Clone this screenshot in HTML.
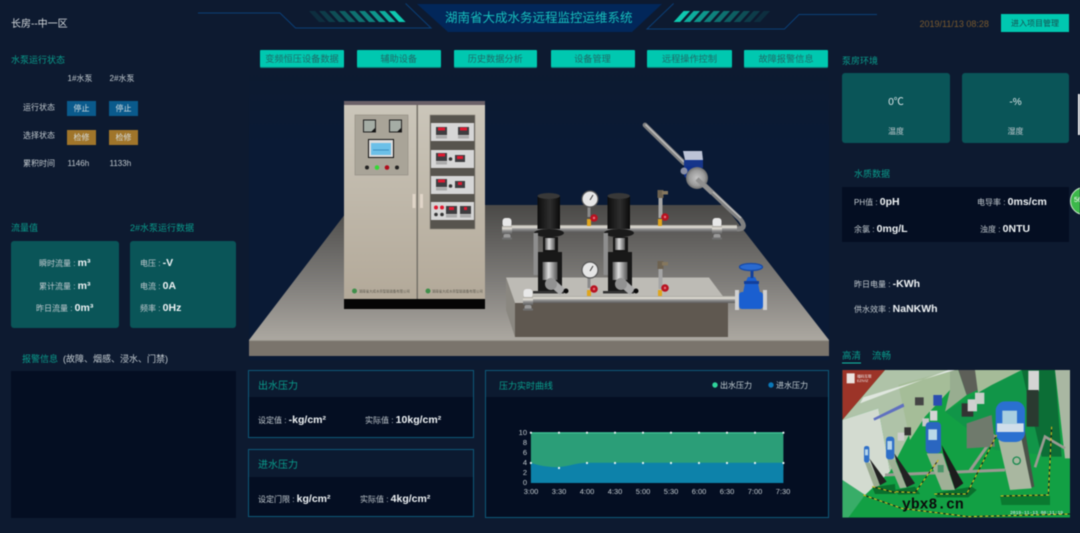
<!DOCTYPE html>
<html lang="zh">
<head>
<meta charset="utf-8">
<title>湖南省大成水务远程监控运维系统</title>
<style>
html,body{margin:0;padding:0;width:1080px;height:533px;overflow:hidden;background:#0d1a30;}
#w{position:relative;width:1080px;height:533px;overflow:hidden;background:#0d1a30;font-family:"Liberation Sans","Noto Sans CJK SC",sans-serif;filter:blur(.45px);}
.t{position:absolute;line-height:12px;white-space:nowrap;color:#c3cbd0;font-size:8px;}
.h{color:#0a9c8c;font-size:9px;}
.v{color:#eef2f4;font-weight:bold;font-size:10.5px;}
.b{position:absolute;}
.tab{position:absolute;top:50px;height:17px;line-height:18px;background:#00c8b0;color:#1f6a68;font-size:9.2px;text-align:center;border-radius:1px;box-shadow:0 1px 0 #0a7f78;}
.sb{position:absolute;width:29px;height:15px;line-height:16px;text-align:center;color:#d5dde0;font-size:8px;}
.blue{background:#0a5a8c;}
.gold{background:#a0752a;}
.card{position:absolute;background:#0a5558;border-radius:3px;}
.panel{position:absolute;background:#040e22;box-sizing:border-box;border:1px solid #0d5878;}
.phead{position:absolute;left:0;top:0;right:0;height:26px;background:#0c1a30;}
</style>
</head>
<body>
<div id="w">

<svg class="b" style="left:0;top:0" width="1080" height="533" viewBox="0 0 1080 533">
<defs>
<linearGradient id="bgf" x1="0" y1="0" x2="0" y2="1"><stop offset="0" stop-color="#0d1a30"/><stop offset=".25" stop-color="#0a1a35"/><stop offset="1" stop-color="#0a1a35"/></linearGradient>
<linearGradient id="plat" x1="0" y1="0" x2="0" y2="1"><stop offset="0" stop-color="#4a4947"/><stop offset=".55" stop-color="#7d7b78"/><stop offset="1" stop-color="#aca8a1"/></linearGradient>
<linearGradient id="cab" x1="0" y1="0" x2="0" y2="1"><stop offset="0" stop-color="#cbc6ba"/><stop offset="1" stop-color="#b3a999"/></linearGradient>
<linearGradient id="hp" x1="0" y1="0" x2="0" y2="1"><stop offset="0" stop-color="#a5a39c"/><stop offset=".3" stop-color="#e4e1d8"/><stop offset=".6" stop-color="#8f8f8f"/><stop offset="1" stop-color="#5e5e5e"/></linearGradient>
<linearGradient id="steel" x1="0" y1="0" x2="1" y2="0"><stop offset="0" stop-color="#555"/><stop offset=".4" stop-color="#dedede"/><stop offset="1" stop-color="#555"/></linearGradient>
<linearGradient id="motor" x1="0" y1="0" x2="1" y2="0"><stop offset="0" stop-color="#0c0c0c"/><stop offset=".55" stop-color="#2e2e2e"/><stop offset="1" stop-color="#0a0a0a"/></linearGradient>
<radialGradient id="fl"><stop offset="0" stop-color="#c5c5c5"/><stop offset=".7" stop-color="#9a9a9a"/><stop offset="1" stop-color="#6c6c6c"/></radialGradient>
<clipPath id="vc"><rect x="22" y="90" width="683" height="443"/></clipPath>
<g id="st1"><polygon points="0,0 6,0 16.6,11 10,11" fill="#0fc8b0"/></g>
<g id="st2"><polygon points="0,11 6.5,11 16.5,0 10,0" fill="#0fc8b0"/></g>
<g id="pump">
  <rect x="537.500" y="196" width="22.500" height="33" fill="url(#motor)"/>
  <ellipse cx="548.700" cy="196" rx="11.200" ry="3" fill="#383838"/>
  <ellipse cx="549" cy="233" rx="15" ry="4" fill="#1a1a1a"/>
  <rect x="533.500" y="233" width="4.500" height="42" fill="#8e8e8e"/>
  <rect x="543" y="237" width="15" height="18" fill="#151515"/>
  <rect x="545" y="238" width="10" height="12" fill="url(#steel)"/>
  <rect x="538" y="252" width="24" height="40" fill="#181818"/>
  <rect x="542.500" y="262" width="15" height="18" fill="url(#steel)"/>
  <rect x="533" y="291" width="31" height="2.500" fill="#333"/>
  <polygon points="546,283 553,278 565,289 560,295" fill="#aaa"/>
  <circle cx="551" cy="284" r="6" fill="#929292"/>
  <circle cx="566" cy="291" r="2.500" fill="#0a0a0a"/>
</g>
<g id="gauge">
  <rect x="587.500" y="207" width="3" height="10" fill="#8a8a8a"/>
  <rect x="587" y="219" width="4" height="7" fill="#e0a51c"/>
  <circle cx="590" cy="199" r="8" fill="#e6e6e6" stroke="#555" stroke-width="1.200"/>
  <line x1="590" y1="200" x2="593" y2="195" stroke="#222" stroke-width=".8"/>
  <circle cx="594" cy="218" r="3.800" fill="#b81220"/>
  <circle cx="594" cy="218" r="1.200" fill="#e8707a"/>
</g>
<g id="trans">
  <rect x="657.500" y="190" width="6" height="8" fill="#6d6250"/>
  <rect x="662" y="191" width="6" height="3.500" fill="#85775e"/>
  <rect x="658.500" y="198" width="4" height="20" fill="#a5a5a5"/>
  <rect x="658" y="219" width="4" height="7" fill="#e0a51c"/>
  <circle cx="665" cy="217" r="3.800" fill="#b81220"/>
  <circle cx="665" cy="217" r="1.200" fill="#e8707a"/>
</g>
<g id="clamp">
  <rect x="-4.500" y="-10" width="9" height="9" rx="3" fill="#e8e8e8"/>
  <rect x="-5" y="-2" width="10" height="8" fill="url(#hp)"/>
  <rect x="-3.500" y="6" width="7" height="5" rx="2" fill="#999"/>
  <rect x="-5" y="9.500" width="10" height="2" fill="#6f6f6f"/>
</g>
</defs>

<!-- header decoration -->
<polyline points="198,13 280,13 295.500,28 431,28 405.600,3.500" fill="none" stroke="#0b3f77" stroke-width="1"/>
<polyline points="673.600,3.500 647,29 784.500,29 799,14.500 877,14.500" fill="none" stroke="#0b3f77" stroke-width="1"/>
<polygon points="417,4 662,4 632,32 448,32" fill="#02275a"/>
<use href="#st1" x="389" y="11" opacity="1"/><use href="#st1" x="379" y="11" opacity=".85"/><use href="#st1" x="369" y="11" opacity=".72"/><use href="#st1" x="359" y="11" opacity=".6"/><use href="#st1" x="349" y="11" opacity=".5"/><use href="#st1" x="339" y="11" opacity=".4"/><use href="#st1" x="329" y="11" opacity=".3"/><use href="#st1" x="319" y="11" opacity=".2"/><use href="#st1" x="309" y="11" opacity=".12"/>
<use href="#st2" x="673.600" y="11" opacity="1"/><use href="#st2" x="683.600" y="11" opacity=".85"/><use href="#st2" x="693.600" y="11" opacity=".72"/><use href="#st2" x="703.600" y="11" opacity=".6"/><use href="#st2" x="713.600" y="11" opacity=".5"/><use href="#st2" x="723.600" y="11" opacity=".4"/><use href="#st2" x="733.600" y="11" opacity=".3"/><use href="#st2" x="743.600" y="11" opacity=".2"/><use href="#st2" x="753.600" y="11" opacity=".12"/>

<!-- scene -->
<rect x="249" y="70" width="580" height="290" fill="url(#bgf)"/>
<polygon points="352,205 724,205 829,340 249,340" fill="url(#plat)"/>
<rect x="249" y="340" width="580" height="16" fill="#7a746c"/>
<rect x="249" y="340" width="580" height="1" fill="#98948c"/>

<!-- cabinet -->
<rect x="344" y="105" width="141" height="194" fill="url(#cab)"/>
<rect x="344" y="101" width="141" height="4" fill="#6b6168"/>
<rect x="416.500" y="105" width="1.500" height="194" fill="#77736a"/>
<rect x="344" y="299" width="141" height="10" fill="#050505"/>
<rect x="355" y="115" width="53" height="60" fill="#a9a498" stroke="#8f8b80" stroke-width=".6"/>
<rect x="363.500" y="120" width="12" height="12" fill="#a5ada5" stroke="#222" stroke-width="1"/>
<polygon points="375,132 375,128 371,132" fill="#111"/>
<rect x="389.500" y="120" width="12" height="12" fill="#a5ada5" stroke="#222" stroke-width="1"/>
<polygon points="401,132 401,128 397,132" fill="#111"/>
<rect x="368.500" y="139.500" width="25" height="18" fill="#ddd" stroke="#111" stroke-width="1"/>
<rect x="371" y="143" width="20" height="12" fill="#6cc0e8"/>
<line x1="373" y1="150" x2="389" y2="150" stroke="#2a7ab0" stroke-width=".7"/>
<circle cx="367" cy="167.500" r="2" fill="#222"/><circle cx="377" cy="167.500" r="2.300" fill="#35d935"/><circle cx="387" cy="167.500" r="2.300" fill="#b00a1a"/><circle cx="397" cy="167.500" r="2" fill="#222"/>
<rect x="430" y="115" width="45" height="114" fill="#57544e" stroke="#8f8b80" stroke-width=".6"/>
<rect x="431" y="123" width="43" height="18" fill="#d6d6d6"/>
<rect x="431" y="150" width="43" height="18" fill="#d6d6d6"/>
<rect x="431" y="176" width="43" height="18" fill="#d6d6d6"/>
<rect x="431" y="202" width="43" height="18" fill="#d6d6d6"/>
<g fill="#3d3d40">
<rect x="436" y="127" width="11" height="8"/><rect x="458" y="127" width="11" height="8"/>
<rect x="436" y="153" width="11" height="8"/><rect x="455" y="155" width="10" height="7"/>
<rect x="436" y="179" width="11" height="8"/><rect x="455" y="181" width="10" height="7"/>
<rect x="446" y="206" width="11" height="8"/><rect x="460" y="206" width="11" height="8"/>
</g>
<g fill="#e01830">
<rect x="438" y="127.500" width="7" height="3"/><rect x="460" y="127.500" width="7" height="3"/>
<rect x="438" y="153.500" width="7" height="3"/><rect x="457" y="156" width="6" height="3"/>
<rect x="438" y="179.500" width="7" height="3"/><rect x="458" y="182" width="4" height="3"/>
<rect x="449" y="207" width="5" height="3"/><rect x="464" y="207" width="3" height="3"/>
<circle cx="436" cy="207.500" r="2"/><circle cx="442" cy="207.500" r="2"/>
</g>
<g fill="#333"><circle cx="450.500" cy="159" r="1.800"/><circle cx="450.500" cy="186" r="1.800"/><circle cx="436" cy="214.500" r="1.800"/><circle cx="442" cy="214.500" r="1.800"/></g>
<g fill="#aaa"><rect x="436" y="135.500" width="11" height="3"/><rect x="458" y="135.500" width="11" height="3"/><rect x="436" y="161.500" width="11" height="3"/><rect x="436" y="187.500" width="11" height="3"/><rect x="446" y="214.500" width="11" height="3"/><rect x="460" y="214.500" width="11" height="3"/></g>
<rect x="412.500" y="194" width="3" height="14" fill="#e0d5c8"/><rect x="420" y="194" width="3" height="14" fill="#e0d5c8"/>
<circle cx="354.500" cy="291" r="2.500" fill="#3f8f4a"/><circle cx="428" cy="291" r="2.500" fill="#3f8f4a"/>
<text x="359" y="292.500" font-size="3.400" fill="#5d5a50" font-family="Liberation Sans,Noto Sans CJK SC,sans-serif">湖南省大成水务智能装备有限公司</text>
<text x="432" y="292.500" font-size="3.400" fill="#5d5a50" font-family="Liberation Sans,Noto Sans CJK SC,sans-serif">湖南省大成水务智能装备有限公司</text>

<!-- upper pipework -->
<line x1="645" y1="125" x2="684" y2="163" stroke="#808080" stroke-width="4.800" stroke-linecap="round"/>
<line x1="645.500" y1="124.500" x2="684" y2="162" stroke="#b8b8b8" stroke-width="1.600"/>
<path d="M697 178 L740 219 Q748 229 737 229" fill="none" stroke="#808080" stroke-width="5"/>
<path d="M697 177 L741 218" fill="none" stroke="#b8b8b8" stroke-width="1.600"/>
<rect x="507" y="225" width="230" height="7" fill="url(#hp)"/>
<rect x="684" y="160" width="19" height="8" fill="#16358a"/>
<polygon points="683,151 702,151 703,160 685,160" fill="#bcc3d6"/>
<rect x="684" y="166" width="13" height="12" rx="3" fill="#10308a"/>
<circle cx="684" cy="171" r="3.500" fill="#8a8fa5"/>
<circle cx="697" cy="178" r="11" fill="url(#fl)"/>
<line x1="697" y1="179" x2="712" y2="193" stroke="#8f8f8f" stroke-width="4.500"/>

<!-- step platform -->
<polygon points="506,277.500 709,277.500 728,303 515,303" fill="#bdbbb5"/>
<polygon points="506,277.500 515,303 515,337 506,310" fill="#8a8780"/>
<rect x="515" y="303" width="213" height="34" fill="#5f5850"/>

<use href="#pump"/><use href="#pump" x="70"/>
<use href="#gauge"/><use href="#gauge" y="71"/>
<use href="#trans"/><use href="#trans" y="71"/>
<use href="#clamp" x="507" y="228"/><use href="#clamp" x="717" y="228"/>

<!-- lower pipe & valve -->
<rect x="530" y="296" width="207" height="7" fill="url(#hp)"/>
<use href="#clamp" x="528" y="299"/>
<rect x="735" y="290" width="4" height="20" fill="#d0d0d0"/>
<rect x="763" y="290" width="4" height="20" fill="#d0d0d0"/>
<rect x="739" y="292" width="24" height="17" rx="3" fill="#1a5fd0"/>
<polygon points="743,293 760,293 758,283 755,277 748,277 745,283" fill="#1a5fd0"/>
<rect x="744" y="281" width="15" height="3" fill="#123f9c"/>
<rect x="750.500" y="270" width="3" height="8" fill="#14409a"/>
<ellipse cx="751" cy="267" rx="11.500" ry="3.500" fill="#2a6ad0" stroke="#164aa8" stroke-width="1.300"/>

<!-- chart -->
<rect x="485.500" y="370.500" width="343" height="147" fill="#040e22" stroke="#0d5878"/>
<rect x="486" y="371" width="342" height="26" fill="#0c1a30"/>
<polygon points="530.900,432.700 783.400,432.700 783.400,470 530.900,470" fill="#2b9e78"/>
<path d="M530.900 462.800 C540 466 550 467.500 559 467 C568 466.500 576 463 587 462.800 L783.400 462.800 L783.400 483 L530.900 483 Z" fill="#0d82aa"/>
<line x1="530.900" y1="432.700" x2="783.400" y2="432.700" stroke="#49d6a4" stroke-width="1"/>
<g fill="#e8f4f4">
<circle cx="530.900" cy="432.700" r="1.100"/><circle cx="559" cy="432.700" r="1.100"/><circle cx="587" cy="432.700" r="1.100"/><circle cx="615" cy="432.700" r="1.100"/><circle cx="643" cy="432.700" r="1.100"/><circle cx="671" cy="432.700" r="1.100"/><circle cx="699" cy="432.700" r="1.100"/><circle cx="727" cy="432.700" r="1.100"/><circle cx="755" cy="432.700" r="1.100"/><circle cx="783.400" cy="432.700" r="1.100"/>
<circle cx="530.900" cy="463" r="1.100"/><circle cx="559" cy="468" r="1.100"/><circle cx="587" cy="463" r="1.100"/><circle cx="615" cy="463" r="1.100"/><circle cx="643" cy="463" r="1.100"/><circle cx="671" cy="463" r="1.100"/><circle cx="699" cy="463" r="1.100"/><circle cx="727" cy="463" r="1.100"/><circle cx="755" cy="463" r="1.100"/><circle cx="783.400" cy="463" r="1.100"/>
</g>
<circle cx="715" cy="385" r="2.700" fill="#30d49c"/>
<circle cx="771" cy="385" r="2.700" fill="#0a78b8"/>

<!-- video -->
<g transform="translate(835,340) scale(.33333)" clip-path="url(#vc)">
<rect x="22" y="90" width="683" height="443" fill="#12a044"/>
<polygon points="22,240 150,90 350,90 240,250 165,395 130,205" fill="#afc3a8"/>
<polygon points="190,135 350,90 345,150 270,230 225,300" fill="#a5bd98"/>
<polygon points="22,240 130,205 165,395 90,465 22,420" fill="#d3dbd0"/>
<polygon points="22,420 90,465 40,533 22,533" fill="#38ad68"/>
<polygon points="345,90 370,90 395,165 330,215 345,150" fill="#98ad90"/>
<polygon points="370,90 440,90 450,140 395,165" fill="#5d5f58"/>
<polygon points="420,90 560,90 470,140 430,165" fill="#a5bb98"/>
<polygon points="330,215 470,135 560,90 600,90 680,350 480,330" fill="#119548"/>
<polygon points="560,90 660,90 680,350 620,350" fill="#0c6e36"/>
<polygon points="660,90 705,90 705,355 690,355" fill="#a9b7a2"/>
<polygon points="22,90 150,90 22,240" fill="#9c3428"/>
<polygon points="75,190 340,90 360,90 85,172" fill="#dfe6de"/>
<rect x="35" y="100" width="24" height="30" fill="#ece4e0"/>
<text x="66" y="113" font-size="11" fill="#eee" font-family="Liberation Sans,Noto Sans CJK SC,sans-serif">福码互联</text>
<text x="66" y="126" font-size="11" fill="#eee" font-family="Liberation Sans,sans-serif">EZIVIZ</text>
<polygon points="115,235 205,190 208,200 118,242" fill="#5f70c0"/>
<rect x="295" y="165" width="26" height="32" fill="#2a4db0"/>
<rect x="240" y="172" width="26" height="24" fill="#444"/>
<polyline points="150,405 510,390" stroke="#9a9a92" stroke-width="9" fill="none"/>
<polyline points="405,392 480,285" stroke="#9a9a92" stroke-width="9" fill="none"/>
<polyline points="600,382 630,290 690,325" stroke="#9a9a92" stroke-width="8" fill="none"/>
<polygon points="395,250 470,225 480,320 395,325" fill="#6f7a6c"/>
<rect x="380" y="190" width="35" height="40" fill="#333"/><rect x="398" y="178" width="28" height="36" fill="#d0d0d0"/><rect x="420" y="158" width="28" height="34" fill="#c8cec8"/>
<rect x="285" y="212" width="22" height="30" fill="#d4d4d4"/><rect x="262" y="235" width="20" height="24" fill="#c8c8c8"/>
<rect x="208" y="262" width="20" height="24" fill="#333"/><rect x="188" y="278" width="20" height="24" fill="#cecece"/>
<rect x="580" y="92" width="32" height="62" fill="#d4d4d4"/><rect x="575" y="150" width="36" height="110" fill="#2a3a30"/>
<polygon points="112,442 180,432 182,462 120,462" fill="#0a6e2c"/>
<polygon points="180,450 240,440 255,462 190,464" fill="#0a6e2c"/>
<polygon points="298,460 410,440 425,450 400,472 305,472" fill="#0a6e2c"/>
<polygon points="495,468 645,468 645,495 500,495" fill="#0a7a30"/>
<polygon points="103,355 155,425 135,436 108,368" fill="#222"/>
<polygon points="90,368 105,368 135,436 118,442" fill="#9aab90"/>
<polygon points="178,340 240,430 215,442 182,358" fill="#222"/>
<polygon points="158,358 180,358 215,442 195,445" fill="#9fb096"/>
<polygon points="320,315 385,430 360,448 325,340" fill="#1c1c1c"/>
<polygon points="275,340 322,340 360,450 320,450" fill="#9fb096"/>
<polygon points="555,270 570,270 598,440 580,445" fill="#4a5248"/>
<polygon points="490,300 558,290 590,445 525,450" fill="#a9b7a0"/>
<rect x="87" y="318" width="16" height="50" rx="7" fill="#2e6fc8"/><rect x="90" y="328" width="9" height="18" fill="#b5d5ea"/>
<rect x="153" y="290" width="25" height="68" rx="9" fill="#2e6fc8"/><rect x="157" y="303" width="14" height="26" fill="#b5d5ea"/>
<rect x="272" y="246" width="46" height="94" rx="12" fill="#2a66c0"/><rect x="280" y="268" width="26" height="32" fill="#b9d9e8"/>
<rect x="482" y="184" width="88" height="122" rx="28" fill="#2a70d0"/><rect x="486" y="250" width="80" height="26" fill="#d0deea"/><rect x="502" y="212" width="44" height="40" fill="#a8cfe0"/>
<circle cx="545" cy="362" r="11" fill="none" stroke="#1a8a50" stroke-width="4"/>
<rect x="308" y="375" width="18" height="22" fill="#258a55" opacity=".7"/>
<g fill="none" stroke="#1a1a10" stroke-width="3">
<polyline points="85,465 200,505 400,530 705,522"/>
<polyline points="112,440 182,458"/>
<polyline points="182,455 240,458 310,360"/>
<polyline points="298,462 395,462 485,285"/>
<polyline points="497,468 640,465 650,260"/>
</g>
<g fill="none" stroke="#e2cc20" stroke-width="3" stroke-dasharray="9 8">
<polyline points="85,465 200,505 400,530 705,522"/>
<polyline points="112,440 182,458"/>
<polyline points="182,455 240,458 310,360"/>
<polyline points="298,462 395,462 485,285"/>
<polyline points="497,468 640,465 650,260"/>
</g>
<text x="525" y="522" font-size="14" fill="#eef" font-family="Liberation Mono,monospace">2019-11-13 08:11:19</text>
</g>
<text x="902" y="508.500" font-size="14.700" font-weight="bold" fill="#0b0b0b" font-family="Liberation Mono,monospace">ybx8.cn</text>

<rect x="842" y="362.500" width="19" height="1" fill="#14c0a8"/>
<rect x="1078" y="94" width="2" height="41" fill="#f2f2f2"/>
</svg>

<!-- top -->
<div class="t" style="left:11px;top:19px;font-size:10px;color:#d8dde0">长房--中一区</div>
<div class="t" style="left:445px;top:11px;font-size:12.500px;line-height:14px;color:#17bfbd">湖南省大成水务远程监控运维系统</div>
<div class="t" style="left:919.500px;top:18px;font-size:9px;color:#7a5a2e">2019/11/13 08:28</div>
<div class="b" style="left:1001px;top:14px;width:68px;height:18px;line-height:19px;background:#00c8b0;color:#164f50;font-size:8px;text-align:center;">进入项目管理</div>

<div class="tab" style="left:260px;width:84px">变频恒压设备数据</div>
<div class="tab" style="left:356.500px;width:84.500px">辅助设备</div>
<div class="tab" style="left:453.500px;width:83.500px">历史数据分析</div>
<div class="tab" style="left:550.500px;width:84px">设备管理</div>
<div class="tab" style="left:647px;width:85px">远程操作控制</div>
<div class="tab" style="left:744px;width:84px">故障报警信息</div>

<!-- left -->
<div class="t h" style="left:11px;top:54px">水泵运行状态</div>
<div class="t" style="left:67.500px;top:73px">1#水泵</div>
<div class="t" style="left:109.500px;top:73px">2#水泵</div>
<div class="t" style="left:23px;top:102px">运行状态</div>
<div class="sb blue" style="left:67px;top:101px">停止</div>
<div class="sb blue" style="left:109px;top:101px">停止</div>
<div class="t" style="left:23px;top:130px">选择状态</div>
<div class="sb gold" style="left:67px;top:130px">检修</div>
<div class="sb gold" style="left:109px;top:130px">检修</div>
<div class="t" style="left:23px;top:158px">累积时间</div>
<div class="t" style="left:67.500px;top:158px">1146h</div>
<div class="t" style="left:109.500px;top:158px">1133h</div>

<div class="t h" style="left:11px;top:222px">流量值</div>
<div class="t h" style="left:130px;top:222px">2#水泵运行数据</div>
<div class="card" style="left:11px;top:241px;width:108px;height:87px"></div>
<div class="card" style="left:130px;top:241px;width:106px;height:87px"></div>
<div class="t" style="left:39px;top:257px">瞬时流量 : <span class="v">m³</span></div>
<div class="t" style="left:39px;top:280px">累计流量 : <span class="v">m³</span></div>
<div class="t" style="left:36px;top:302px">昨日流量 : <span class="v">0m³</span></div>
<div class="t" style="left:140px;top:257px">电压 : <span class="v">-V</span></div>
<div class="t" style="left:140px;top:280px">电流 : <span class="v">0A</span></div>
<div class="t" style="left:140px;top:302px">频率 : <span class="v">0Hz</span></div>

<div class="t h" style="left:22px;top:353px">报警信息</div>
<div class="t" style="left:63px;top:353px;font-size:9px">(故障、烟感、浸水、门禁)</div>
<div class="b" style="left:11px;top:371px;width:225px;height:147px;background:#040e22"></div>

<!-- pressure panels -->
<div class="panel" style="left:248px;top:370px;width:226px;height:68px"><div class="phead"></div></div>
<div class="panel" style="left:248px;top:449px;width:226px;height:68px"><div class="phead" style="height:27px"></div></div>
<div class="t" style="left:258px;top:381px;font-size:10px;color:#0a9c8c">出水压力</div>
<div class="t" style="left:258px;top:414px">设定值 : <span class="v">-kg/cm²</span></div>
<div class="t" style="left:365px;top:414px">实际值 : <span class="v">10kg/cm²</span></div>
<div class="t" style="left:258px;top:460px;font-size:10px;color:#0a9c8c">进水压力</div>
<div class="t" style="left:258px;top:493px">设定门限 : <span class="v">kg/cm²</span></div>
<div class="t" style="left:360px;top:493px">实际值 : <span class="v">4kg/cm²</span></div>

<!-- chart text -->
<div class="t h" style="left:499px;top:380px;color:#0aa08e">压力实时曲线</div>
<div class="t" style="left:720px;top:380px;color:#c5d0d4">出水压力</div>
<div class="t" style="left:776px;top:380px;color:#c5d0d4">进水压力</div>
<div class="t" style="left:513px;top:427px;width:14px;text-align:right;font-size:7.500px">10</div>
<div class="t" style="left:513px;top:437px;width:14px;text-align:right;font-size:7.500px">8</div>
<div class="t" style="left:513px;top:447px;width:14px;text-align:right;font-size:7.500px">6</div>
<div class="t" style="left:513px;top:457px;width:14px;text-align:right;font-size:7.500px">4</div>
<div class="t" style="left:513px;top:467px;width:14px;text-align:right;font-size:7.500px">2</div>
<div class="t" style="left:513px;top:477px;width:14px;text-align:right;font-size:7.500px">0</div>
<div class="t" style="left:516px;top:486px;width:30px;text-align:center;font-size:7.500px">3:00</div>
<div class="t" style="left:544px;top:486px;width:30px;text-align:center;font-size:7.500px">3:30</div>
<div class="t" style="left:572px;top:486px;width:30px;text-align:center;font-size:7.500px">4:00</div>
<div class="t" style="left:600px;top:486px;width:30px;text-align:center;font-size:7.500px">4:30</div>
<div class="t" style="left:628px;top:486px;width:30px;text-align:center;font-size:7.500px">5:00</div>
<div class="t" style="left:656px;top:486px;width:30px;text-align:center;font-size:7.500px">5:30</div>
<div class="t" style="left:684px;top:486px;width:30px;text-align:center;font-size:7.500px">6:00</div>
<div class="t" style="left:712px;top:486px;width:30px;text-align:center;font-size:7.500px">6:30</div>
<div class="t" style="left:740px;top:486px;width:30px;text-align:center;font-size:7.500px">7:00</div>
<div class="t" style="left:768px;top:486px;width:30px;text-align:center;font-size:7.500px">7:30</div>

<!-- right -->
<div class="t h" style="left:842px;top:55px">泵房环境</div>
<div class="card" style="left:842px;top:73px;width:108px;height:70px"></div>
<div class="card" style="left:962px;top:73px;width:107px;height:70px"></div>
<div class="t" style="left:842px;top:97px;width:108px;text-align:center;font-size:10px;color:#dfe8ea">0℃</div>
<div class="t" style="left:962px;top:97px;width:107px;text-align:center;font-size:10px;color:#dfe8ea">-%</div>
<div class="t" style="left:842px;top:126px;width:108px;text-align:center">温度</div>
<div class="t" style="left:962px;top:126px;width:107px;text-align:center">湿度</div>

<div class="t h" style="left:854px;top:168px">水质数据</div>
<div class="b" style="left:842px;top:187px;width:227px;height:55px;background:#040e22"></div>
<div class="t" style="left:854px;top:196px">PH值 : <span class="v">0pH</span></div>
<div class="t" style="left:977px;top:196px">电导率 : <span class="v">0ms/cm</span></div>
<div class="t" style="left:854px;top:223px">余氯 : <span class="v">0mg/L</span></div>
<div class="t" style="left:980px;top:223px">浊度 : <span class="v">0NTU</span></div>
<div class="t" style="left:854px;top:278px">昨日电量 : <span class="v">-KWh</span></div>
<div class="t" style="left:854px;top:303px">供水效率 : <span class="v">NaNKWh</span></div>
<div class="b" style="left:1070px;top:187px;width:28px;height:28px;box-sizing:border-box;border:1px solid #cfe8cf;border-radius:50%;background:#3cb84a;color:#fff;font-size:7px;line-height:26px;padding-left:3px">56</div>

<div class="t" style="left:842px;top:351px;font-size:9.500px;color:#0a9c8c">高清</div>
<div class="t" style="left:872px;top:351px;font-size:9.500px;color:#0a9c8c">流畅</div>

</div>
</body>
</html>
